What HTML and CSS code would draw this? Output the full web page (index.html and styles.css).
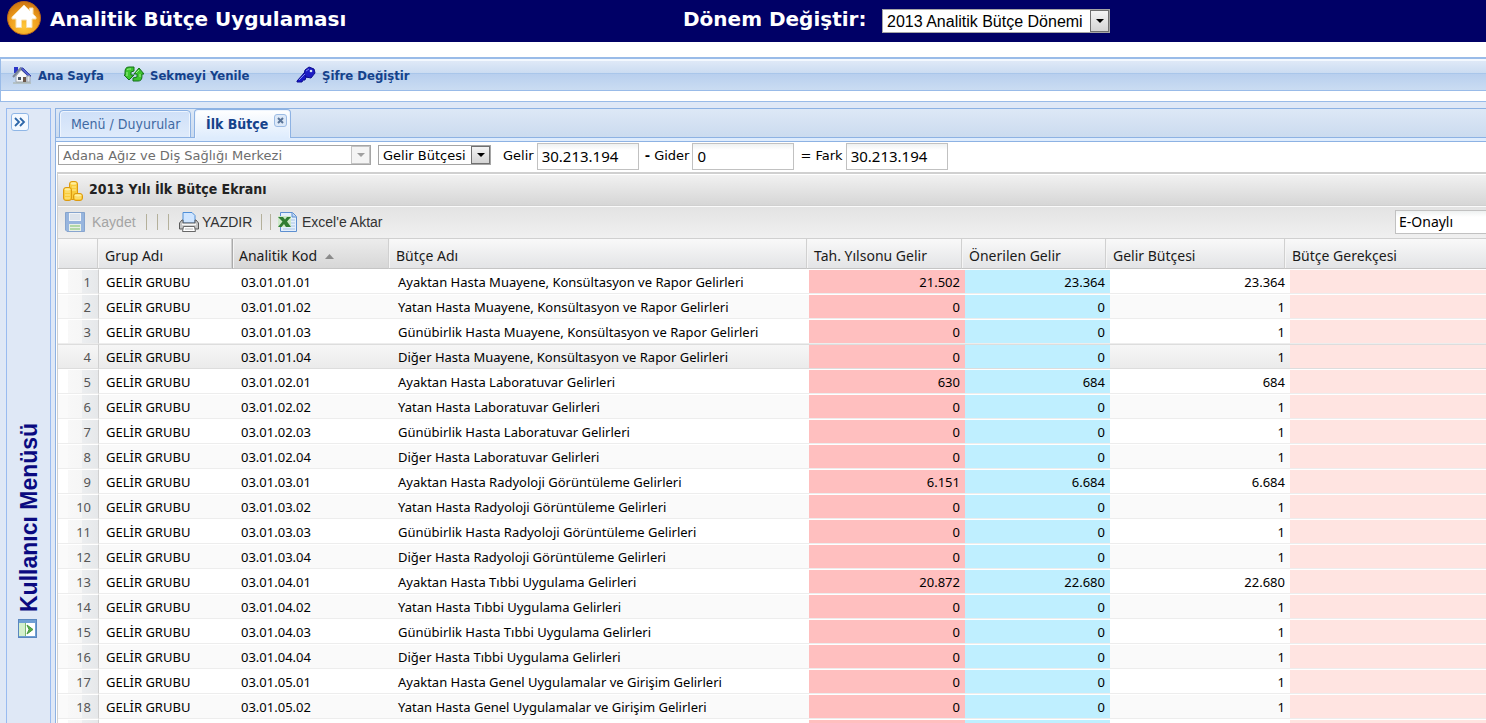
FILE: index.html
```html
<!DOCTYPE html>
<html lang="tr">
<head>
<meta charset="utf-8">
<title>Analitik Bütçe Uygulaması</title>
<link rel="stylesheet" href="styles.css">
</head>
<body>
<header class="app-header">
  <svg class="logo" viewBox="0 0 34 34" aria-hidden="true">
    <defs>
      <radialGradient id="orb" cx="50%" cy="75%" r="70%"><stop offset="0" stop-color="#ffc83a"/><stop offset="0.6" stop-color="#f0a01e"/><stop offset="1" stop-color="#cf7812"/></radialGradient>
    </defs>
    <circle cx="17" cy="17" r="16.5" fill="url(#orb)" stroke="#b8651a"/>
    <path d="M17 4 5 16v2h4v8.500h5.500V19h5v7.500H25V18h4v-2l-3-3V7h-3.500v2.500z" fill="#fff" stroke="#f7dfae"/>
  </svg>
  <h1 class="app-title">Analitik Bütçe Uygulaması</h1>
  <label class="term-label" for="term">Dönem Değiştir:</label>
  <span class="picker picker-term">
    <select id="term"><option>2013 Analitik Bütçe Dönemi</option></select>
  </span>
</header>

<div class="nav-frame">
  <nav class="nav">
    <button type="button" class="nav-btn nav-home">
      <svg class="nav-icon" viewBox="0 0 20 18" aria-hidden="true">
        <path d="M2 1h4v6H2z" fill="#2a35c8"/>
        <path d="M4 10 9 4l6 5v7H4z" fill="#f4f6f8" stroke="#a0a8b2"/>
        <path d="M8 2h3l8 8-2 1z" fill="#5562d0" stroke="#3440a8"/>
        <path d="M1 11 9 2" fill="none" stroke="#7a8494" stroke-width="2"/>
        <path d="M15 10h3v6h-3z" fill="#dfe4ea" stroke="#a0a8b2"/>
        <path d="M6 11h3v3H6z" fill="#4b5666"/><path d="M11 11h3v5h-3z" fill="#6b5648"/>
        <path d="M1 17h18" stroke="#a3ab9a"/>
      </svg>Ana Sayfa</button>
    <button type="button" class="nav-btn nav-refresh">
      <svg class="nav-icon" viewBox="0 0 20 18" aria-hidden="true">
        <path d="M10 1H5C2 1 1 3 1 6v3H0l5 5 5-5H7V6l3-1z" fill="#3cc42e" stroke="#14701a"/>
        <path d="M9 15h5c4 0 4-3 4-7h2l-5-6-5 6h3v3l-4 1z" fill="#3cc42e" stroke="#14701a"/>
        <path d="M3 4c1-1 2-1 4-1M15 4l-3 3M3 6v4M16 8v3" stroke="#a0f590" fill="none"/>
      </svg>Sekmeyi Yenile</button>
    <button type="button" class="nav-btn nav-password">
      <svg class="nav-icon" viewBox="0 0 20 18" aria-hidden="true">
        <path d="M9 6 1 15v1h5l1-2h2l1-3h3z" fill="#1818c8" stroke="#0c0c90"/>
        <path d="M9 4l4-3 5 2 1 4-4 5-5-1-2-3z" fill="#1c1cc4" stroke="#0c0c90"/>
        <path d="M10 5l3-2M3 14l6-6" stroke="#7a86f0" fill="none"/>
        <circle cx="15" cy="5" r="1.3" fill="#d5e2f4"/>
      </svg>Şifre Değiştir</button>
  </nav>
</div>

<div class="workspace">
  <aside class="side">
    <button type="button" class="expand" aria-label="Menüyü aç">
      <svg viewBox="0 0 18 18" aria-hidden="true"><rect x="0.5" y="0.5" width="17" height="17" rx="2.5" fill="#f4f9ff" stroke="#8fb6e6"/><path d="M4 5l4 4-4 4M9 5l4 4-4 4" fill="none" stroke="#2d66a8" stroke-width="1.8"/></svg>
    </button>
    <div class="side-label">Kullanıcı Menüsü</div>
    <svg class="side-icon" viewBox="0 0 19 19" aria-hidden="true"><rect x="0.5" y="0.5" width="18" height="18" fill="#6f9fd4" stroke="#5a87bf"/><path d="M1 4h6v13H1z" fill="#d4f0cc"/><path d="M8 4h9v13H8z" fill="#fff"/><path d="M7 4h1v13H7z" fill="#7db870"/><path d="M9 6l6 4.500L9 15l2-4.500z" fill="#58ad4b" stroke="#4a9a40"/></svg>
  </aside>

  <main class="main">
    <div class="tabs">
      <button type="button" class="tab">Menü / Duyurular</button>
      <div class="tab tab-active"><button type="button" class="tab-name">İlk Bütçe</button><button type="button" class="tab-close" aria-label="Kapat"><svg viewBox="0 0 13 13" aria-hidden="true"><rect x="0.5" y="0.5" width="12" height="12" rx="2.5" fill="#dde9f8" stroke="#9dbce4"/><path d="M4 4l5 5M9 4l-5 5" stroke="#5a7498" stroke-width="2"/></svg></button></div>
    </div>

    <form class="filters">
      <span class="picker picker-org picker-off"><select aria-label="Kurum" disabled><option>Adana Ağız ve Diş Sağlığı Merkezi</option></select></span>
      <span class="picker picker-kind"><select aria-label="Bütçe türü"><option>Gelir Bütçesi</option></select></span>
      <label for="income">Gelir</label><input id="income" class="amount" value="30.213.194">
      <label for="expense"><b>-</b> Gider</label><input id="expense" class="amount" value="0">
      <label for="diff">= Fark</label><input id="diff" class="amount" value="30.213.194">
    </form>

    <section class="panel">
      <div class="panel-head">
        <svg class="coins" viewBox="0 0 20 20" aria-hidden="true">
          <g stroke="#dc9a10" fill="#f9cc3c"><rect x="6.500" y="0.500" width="8" height="18" rx="2.500"/><rect x="0.500" y="6.500" width="8" height="13" rx="2.500"/><rect x="10.500" y="12.500" width="9" height="7" rx="2.500"/></g>
          <g fill="#ffee9c"><ellipse cx="10.500" cy="2.500" rx="3" ry="1.200"/><ellipse cx="4.500" cy="8.500" rx="3" ry="1.200"/><ellipse cx="15" cy="14.500" rx="3.500" ry="1.200"/></g>
          <path d="M2 11h5M2 14h5M2 17h5M9 6h4M9 9h4M12 17h6" stroke="#ffeb96"/>
        </svg>
        <h2>2013 Yılı İlk Bütçe Ekranı</h2>
      </div>

      <div class="toolbar">
        <button type="button" class="tool tool-save" disabled>
          <svg viewBox="0 0 20 20" aria-hidden="true"><path d="M.5.5h19v19H2l-1.500-1.500z" fill="#84a9dc" stroke="#6f94c8"/><path d="M4 1h12v8H4z" fill="#f3f7fc"/><path d="M5 3h10M5 5h10M5 7h10" stroke="#c2cfdf"/><path d="M4 12h12v7H4z" fill="#e8f2e4"/><path d="M5 14h10M5 17h10" stroke="#8cc97c" stroke-width="1.500"/></svg>Kaydet</button>
        <i class="sep"></i><i class="sep"></i><i class="sep"></i>
        <button type="button" class="tool tool-print">
          <svg viewBox="0 0 20 20" aria-hidden="true"><path d="M4 .5h9l3 3V11H4z" fill="#cfe5ff" stroke="#4f8fd8"/><path d="M.5 11 3 8h1v3h12V8h1l2.500 3v6h-19z" fill="#c4c4c4" stroke="#5a5a5a"/><path d="M3 12.500h14" stroke="#f8f8f8" stroke-width="1.500"/><path d="M4.500 14.500h11l1 5h-13z" fill="#fff" stroke="#686868"/><path d="M6 17h8" stroke="#bbb"/></svg>YAZDIR</button>
        <i class="sep"></i><i class="sep"></i>
        <button type="button" class="tool tool-excel">
          <svg viewBox="0 0 20 20" aria-hidden="true"><path d="M2.500.5h12l4 4v15h-16z" fill="#e4effb" stroke="#5d8fd0"/><path d="M14 1v4h4" fill="#b6d2f2" stroke="#5d8fd0"/><path d="M13 8h4M13 11h4M13 14h4M5 17h12" stroke="#a9c5e6"/><path d="M0 4h13v11H0z" fill="#cde8c8"/><path d="M0 5h5l2 2.500L9 5h4L9 9.500l4 5.500H8l-2-3-2.500 3H0l4.500-5.500z" fill="#2f7d32"/></svg>Excel'e Aktar</button>
        <input class="approval" aria-label="Onay durumu" value="E-Onaylı">
      </div>

      <table class="grid grid-head">
        <colgroup><col class="c-no"><col class="c-group"><col class="c-code"><col class="c-name"><col class="c-est"><col class="c-prop"><col class="c-budget"><col></colgroup>
        <thead><tr><th aria-label="Sıra"></th><th>Grup Adı</th><th class="sorted">Analitik Kod<svg class="sort" viewBox="0 0 9 5" aria-hidden="true"><path d="M0 5 4.500 0 9 5z" fill="#8a8a8a"/></svg></th><th>Bütçe Adı</th><th>Tah. Yılsonu Gelir</th><th>Önerilen Gelir</th><th>Gelir Bütçesi</th><th>Bütçe Gerekçesi</th></tr></thead>
      </table>
      <table class="grid grid-body" aria-label="2013 Yılı İlk Bütçe">
        <colgroup><col class="c-no"><col class="c-group"><col class="c-code"><col class="c-name"><col class="c-est"><col class="c-prop"><col class="c-budget"><col></colgroup>
        <tbody id="rows"></tbody>
      </table>
    </section>
  </main>
</div>
<script src="app.js"></script>
</body>
</html>
```
FILE: styles.css
```css
* { box-sizing: border-box; }

body {
  margin: 0;
  height: 100vh;
  overflow: hidden;
  display: flex;
  flex-direction: column;
  background: #fff;
  font-family: "DejaVu Sans", sans-serif;
  font-size: 13px;
  color: #000;
}

button, input, select { font: inherit; color: inherit; margin: 0; }
button { background: none; border: 0; padding: 0; text-align: left; white-space: nowrap; }
svg { display: block; flex: none; }

/* Header */
.app-header {
  flex: none;
  display: flex;
  align-items: center;
  height: 42px;
  padding: 0 0 6px 7px;
  background: #000066;
  color: #fff;
}
.logo { width: 34px; height: 34px; }
.app-title, .term-label { padding-top: 2px; font-size: 20px; line-height: 24px; font-weight: bold; }
.app-title { margin: 0 0 0 9px; width: 633px; }
.term-label { width: 199px; }

/* Drop-downs */
.picker { position: relative; display: block; height: 20px; border: 1px solid #a5a5a5; background: #fff; }
.picker select {
  display: block;
  width: 100%;
  height: 100%;
  padding: 0 20px 0 4px;
  border: 0;
  background: none;
  appearance: none;
  white-space: nowrap;
}
.picker::before {
  content: "";
  position: absolute;
  top: 0; right: 0; bottom: 0;
  width: 17px;
  border: 1px solid #707070;
  background: linear-gradient(#f4f4f4, #d4d4d4);
  pointer-events: none;
}
.picker::after {
  content: "";
  position: absolute;
  top: 7px; right: 5px;
  border: 4px solid transparent;
  border-top-color: #000;
  border-bottom: 0;
  pointer-events: none;
}
.picker-term { width: 228px; height: 24px; margin-top: 6px; color: #000; font: 16px "Liberation Sans", sans-serif; }
.picker-term::after { top: 9px; }
.picker-off { color: #6d6d6d; }
.picker-off select { opacity: 1; }
.picker-off::before { border-color: #c4c4c4; background: #f4f4f4; }
.picker-off::after { border-top-color: #a0a0a0; }

/* Navigation bar */
.nav-frame {
  flex: none;
  margin-top: 15px;
  height: 45px;
  border: solid #99bbe8;
  border-width: 2px 0 1px 1px;
}
.nav {
  display: flex;
  align-items: center;
  height: 32px;
  padding: 0 0 1px 11px;
  border-top: 2px solid #f3f8fe;
  border-bottom: 1px solid #99bbe8;
  background: linear-gradient(#dfe9f7 0, #cbdcf1 12px, #a9c6ea 12px, #a9c6ea 13px, #b8cfee 13px, #cadcf2 100%);
}
.nav-btn {
  display: flex;
  align-items: center;
  gap: 6px;
  color: #15428b;
  font: bold 13px "DejaVu Sans Condensed", "DejaVu Sans", sans-serif;
}
.nav-icon { width: 20px; height: 18px; }
.nav-home { width: 112px; }
.nav-refresh { width: 172px; }

/* Workspace */
.workspace {
  flex: 1;
  min-height: 0;
  display: flex;
  gap: 4px;
  padding: 6px 0 0 6px;
  background: #dfe8f6;
}
.side {
  flex: none;
  width: 45px;
  display: flex;
  flex-direction: column;
  border: solid #99bbf0;
  border-width: 1px 1px 0;
}
.expand { width: 18px; height: 18px; margin: 4px 0 0 4px; }
.side-label {
  margin: 291px 0 7px 10px;
  height: 190px;
  writing-mode: vertical-rl;
  transform: rotate(180deg);
  width: 24px;
  align-self: flex-start;
  font: bold 23px/24px "Liberation Sans", sans-serif;
  color: #0a0a80;
  white-space: nowrap;
}
.side-icon { width: 19px; height: 19px; margin-left: 11px; }

.main {
  flex: 1;
  min-width: 0;
  overflow: hidden;
  border: solid #8db2e3;
  border-width: 1px 0 0 1px;
  background: #fff;
}

/* Tabs */
.tabs {
  display: flex;
  align-items: flex-end;
  gap: 3px;
  height: 33px;
  padding: 0 0 3px 3px;
  border-bottom: 1px solid #8db2e3;
  background: linear-gradient(#dde8f6 0, #cbdbef 28px, #8db2e3 28px, #8db2e3 29px, #deecfd 29px);
}
.tab {
  height: 28px;
  border: 1px solid #8db2e3;
  border-radius: 4px 4px 0 0;
  box-shadow: inset 1px 1px #eef5fe, inset -1px 0 #eef5fe;
  background: linear-gradient(#cfe0f8, #dfebfb);
  padding: 0 11px;
  width: 132px;
  font: 14px "DejaVu Sans Condensed", "DejaVu Sans", sans-serif;
  color: #416aa3;
}
.tab-active {
  display: flex;
  width: 97px;
  height: 29px;
  padding: 0 3px 0 11px;
  justify-content: space-between;
  border-bottom: 0;
  background: linear-gradient(#fff, #deecfd);
  font-weight: bold;
  color: #15428b;
}
.tab-close { width: 13px; height: 13px; margin-top: 4px; }

/* Filters */
.filters { display: flex; align-items: center; height: 30px; padding: 0 0 2px 2px; }
.filters > label { margin: 0 3px 0 6px; white-space: nowrap; }
.picker-org { width: 313px; margin-right: 7px; }
.picker-kind { width: 113px; margin-right: 6px; }
.picker-org, .picker-kind, .filters > label { margin-bottom: 2px; }
.amount, .approval {
  height: 27px;
  width: 102px;
  padding: 0 4px;
  border: 1px solid #c1c1c1;
  background: linear-gradient(#eef1f1, #fff 6px);
  font: 15px "Noto Sans", sans-serif;
}

/* Panel */
.panel { margin-left: 1px; border: solid #d0d0d0; border-width: 2px 0 0 1px; }
.panel-head {
  display: flex;
  align-items: center;
  gap: 6px;
  height: 32px;
  padding: 1px 0 0 5px;
  border-top: 1px solid #fff;
  border-bottom: 1px solid #d0d0d0;
  background: linear-gradient(#f1f1f1, #d6d6d6);
}
.panel-head h2 { margin: 0 0 4px; font: bold 14px "DejaVu Sans Condensed", "DejaVu Sans", sans-serif; color: #222; }
.coins { width: 20px; height: 20px; }

.toolbar {
  display: flex;
  align-items: center;
  height: 33px;
  padding: 0 0 2px 7px;
  border-top: 1px solid #fafafa;
  border-bottom: 1px solid #d0d0d0;
  background: linear-gradient(#e3e3e3, #f0f0f0);
}
.tool { display: flex; align-items: center; gap: 4px; font: 14px "Liberation Sans", sans-serif; color: #333; }
.tool svg { width: 20px; height: 20px; }
.tool-save { gap: 7px; width: 81px; color: #a4a4a4; }
.tool-save svg { opacity: 0.8; }
.tool-print { gap: 3px; width: 82px; }
.tool-excel { margin-left: -4px; }
.sep { flex: none; width: 1px; height: 16px; margin-right: 10px; background: #b4b09a; }
.tool-excel { margin-left: 0; }
.tool-print + .sep { margin-right: 8px; }
.tool-print + .sep + .sep { margin-right: 7px; }
.approval { width: 91px; height: 24px; margin-left: auto; padding: 0 3px; border-right: 0; font-size: 14px; }

/* Grid */
.grid {
  width: 100%;
  table-layout: fixed;
  border-collapse: separate;
  border-spacing: 0;
  font: 13px "Noto Sans", sans-serif;
}
.c-no { width: 40px; }
.c-group { width: 134px; }
.c-code { width: 157px; }
.c-name { width: 418px; }
.c-est { width: 155px; }
.c-prop { width: 144px; }
.c-budget { width: 179px; }
.grid-body .c-no { width: 41px; }
.grid-body .c-name { width: 419px; }
.grid-body .c-est { width: 156px; }
.grid-body .c-prop { width: 145px; }
.grid-body .c-budget { width: 180px; }

th {
  height: 30px;
  padding: 3px 7px 0;
  border-right: 1px solid #d0d0d0;
  border-bottom: 1px solid #c5c5c5;
  box-shadow: inset 1px 0 #f5f5f5;
  background: linear-gradient(#f9f9f9, #e3e4e6);
  font-weight: normal;
  font-size: 14px;
  text-align: left;
  white-space: nowrap;
  color: #1a1a1a;
}
th:last-child { border-right: 0; }
th.sorted { padding-left: 6px; background: linear-gradient(#ececec, #d7d7d7); border-left: 1px solid #aaa; }
.sort { display: inline-block; width: 9px; height: 5px; margin: 0 0 2px 8px; }

td {
  height: 25px;
  padding: 0 8px;
  border-top: 1px solid #fff;
  border-bottom: 1px solid #ededed;
  white-space: nowrap;
  overflow: hidden;
}
td.group { padding-left: 7px; }
tr:nth-child(even) td { background-color: #fafafa; }
.num { text-align: right; padding: 0 5px; }
td.no {
  padding: 0 7px;
  border-right: 1px solid #d0d0d0;
  color: #555;
  text-align: right;
  background-image: linear-gradient(90deg, transparent 10px, #f8f8f8 10px, #f6f6f6 24px, #eceef0 24px, #e6e8ea 100%);
}
tr.over td { border-top-color: #ddd; border-bottom-color: #ddd; background: linear-gradient(#f6f6f6, #ebebeb); }
tbody tr td.est { background: #ffbfbf; background-clip: padding-box; }
tbody tr td.prop { background: #bfefff; background-clip: padding-box; }
tbody tr td.reason { background: #ffe4e1; background-clip: padding-box; }
```
FILE: app.js
```js
const services = [
  "Muayene, Konsültasyon ve Rapor",
  "Laboratuvar",
  "Radyoloji Görüntüleme",
  "Tıbbi Uygulama",
  "Genel Uygulamalar ve Girişim"
];
const patients = ["Ayaktan", "Yatan", "Günübirlik", "Diğer"];
const amounts = {
  0: ["21.502", "23.364", "23.364"],
  4: ["630", "684", "684"],
  8: ["6.151", "6.684", "6.684"],
  12: ["20.872", "22.680", "22.680"]
};
const rowCount = 18;

const body = document.getElementById("rows");

function addRow(cells) {
  const row = body.insertRow();
  for (const [name, text] of cells) {
    const cell = row.insertCell();
    cell.className = name;
    cell.textContent = text;
  }
  return row;
}

for (let i = 0; i < rowCount; i++) {
  const service = Math.floor(i / 4);
  const patient = i % 4;
  const [est, prop, budget] = amounts[i] || ["0", "0", "1"];
  const row = addRow([
    ["no", i + 1],
    ["group", "GELİR GRUBU"],
    ["code", `03.01.0${service + 1}.0${patient + 1}`],
    ["name", `${patients[patient]} Hasta ${services[service]} Gelirleri`],
    ["num est", est],
    ["num prop", prop],
    ["num", budget],
    ["reason", ""]
  ]);
  if (i === 3) row.className = "over";
}

// Blank row that closes the list
addRow(["no", "group", "code", "name", "num est", "num prop", "num", "reason"].map(name => [name, ""]));
```
